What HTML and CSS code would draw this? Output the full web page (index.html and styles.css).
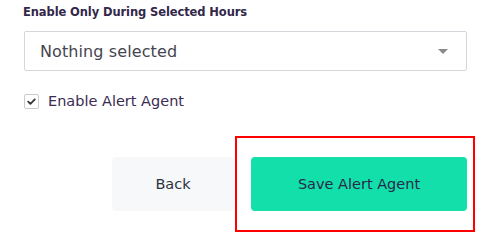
FILE: index.html
```html
<!DOCTYPE html>
<html>
<head>
<meta charset="utf-8">
<link rel="stylesheet" href="styles.css">
</head>
<body>
<div class="page">
  <div class="field-label">Enable Only During Selected Hours</div>
  <div class="select">
    <span class="select-text">Nothing selected</span>
    <span class="caret"></span>
  </div>
  <label class="check-row">
    <span class="checkbox">
      <svg width="11" height="11" viewBox="0 0 11 11"><path d="M2.2 5.6 L4.4 7.8 L8.8 3.4" fill="none" stroke="#333" stroke-width="1.8" stroke-linecap="round" stroke-linejoin="round"/></svg>
    </span>
    <span class="check-text">Enable Alert Agent</span>
  </label>
  <div class="actions">
    <button class="btn btn-back">Back</button>
    <div class="save-wrap">
      <button class="btn btn-save">Save Alert Agent</button>
      <div class="highlight"></div>
    </div>
  </div>
</div>
</body>
</html>
```
FILE: styles.css
```css
* { box-sizing: border-box; }
html, body { margin: 0; padding: 0; background: #fff; }
body { font-family: "DejaVu Sans", "Noto Sans", sans-serif; }
.page {
  width: 486px;
  height: 247px;
  padding: 5px 19px 0 24px;
  position: relative;
}
.field-label {
  font-size: 11.5px;
  font-weight: bold;
  color: #33274a;
  line-height: 14px;
  margin-left: -1px;
  letter-spacing: -0.1px;
}
.select {
  margin-top: 12px;
  height: 40px;
  border: 1px solid #d6d6dc;
  border-radius: 2px;
  display: flex;
  align-items: center;
  justify-content: space-between;
  padding: 0 18px 0 15px;
}
.select-text {
  font-size: 16px;
  color: #45454f;
  letter-spacing: 0.1px;
}
.caret {
  width: 0;
  height: 0;
  border-left: 5px solid transparent;
  border-right: 5px solid transparent;
  border-top: 5px solid #8a8a8a;
}
.check-row {
  display: flex;
  align-items: center;
  margin-top: 22px;
  gap: 9px;
}
.checkbox {
  width: 15px;
  height: 15px;
  border: 1px solid #c9c9d0;
  border-radius: 2px;
  display: flex;
  align-items: center;
  justify-content: center;
}
.check-text {
  font-size: 14.5px;
  color: #3b2b52;
  line-height: 16px;
}
.actions {
  margin-top: 48px;
  display: flex;
  justify-content: flex-end;
  gap: 17px;
}
.btn {
  height: 54px;
  border: none;
  border-radius: 4px;
  font-family: "DejaVu Sans", "Noto Sans", sans-serif;
  font-size: 14.5px;
  cursor: pointer;
}
.btn-back {
  width: 122px;
  background: #f7f8fa;
  color: #2e3140;
}
.save-wrap {
  position: relative;
}
.btn-save {
  width: 216px;
  background: #13dfab;
  color: #272a48;
}
.highlight {
  position: absolute;
  top: -21px;
  bottom: -21px;
  left: -16px;
  right: -8px;
  border: 2px solid #ff0000;
  pointer-events: none;
}
```
